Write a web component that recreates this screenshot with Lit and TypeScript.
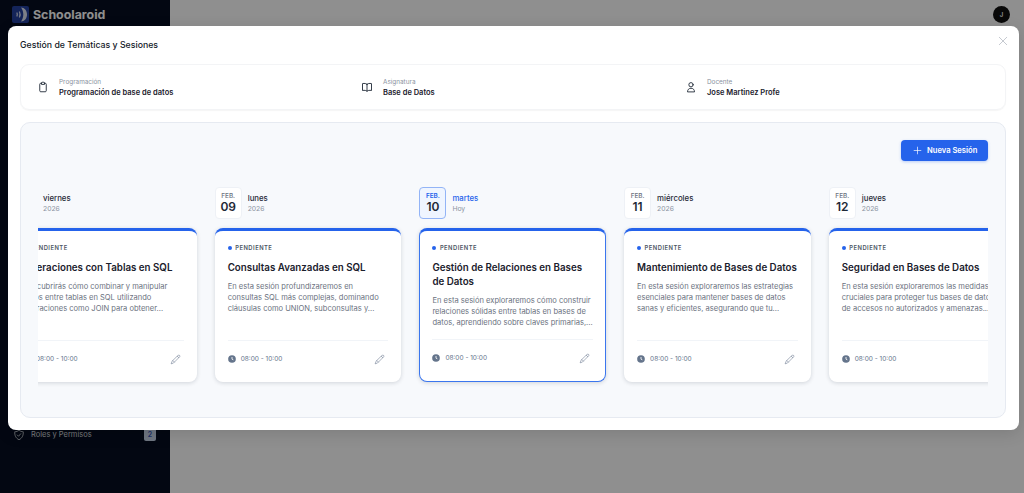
import { LitElement, html, css, svg } from "lit";
import { customElement } from "lit/decorators.js";

const sessions = [
  {
    month: "FEB.",
    day: "06",
    weekday: "viernes",
    sub: "2026",
    title: "Operaciones con Tablas en SQL",
    desc: "Descubrirás cómo combinar y manipular datos entre tablas en SQL utilizando operaciones como JOIN para obtener...",
  },
  {
    month: "FEB.",
    day: "09",
    weekday: "lunes",
    sub: "2026",
    title: "Consultas Avanzadas en SQL",
    desc: "En esta sesión profundizaremos en consultas SQL más complejas, dominando cláusulas como UNION, subconsultas y...",
  },
  {
    month: "FEB.",
    day: "10",
    weekday: "martes",
    sub: "Hoy",
    today: true,
    title: "Gestión de Relaciones en Bases de Datos",
    desc: "En esta sesión exploraremos cómo construir relaciones sólidas entre tablas en bases de datos, aprendiendo sobre claves primarias,...",
  },
  {
    month: "FEB.",
    day: "11",
    weekday: "miércoles",
    sub: "2026",
    title: "Mantenimiento de Bases de Datos",
    desc: "En esta sesión exploraremos las estrategias esenciales para mantener bases de datos sanas y eficientes, asegurando que tu...",
  },
  {
    month: "FEB.",
    day: "12",
    weekday: "jueves",
    sub: "2026",
    title: "Seguridad en Bases de Datos",
    desc: "En esta sesión exploraremos las medidas cruciales para proteger tus bases de datos de accesos no autorizados y amenazas...",
  },
];

const outline = (size: number, width: number, d: unknown) => html`
  <svg width=${size} height=${size} viewBox="0 0 24 24" fill="none" stroke="currentColor" stroke-width=${width} stroke-linecap="round" stroke-linejoin="round">${d}</svg>
`;

const clipboardIcon = svg`<path d="M9 4.500H7.500a2 2 0 0 0-2 2V19.500a2 2 0 0 0 2 2h9a2 2 0 0 0 2-2V6.500a2 2 0 0 0-2-2H15"/><path d="M9 6V3.800A1.300 1.300 0 0 1 10.300 2.500h3.400A1.300 1.300 0 0 1 15 3.800V6z"/>`;
const bookIcon = svg`<path d="M12 6.500C10.500 5.300 8.500 4.800 6 4.800c-1.200 0-2.200.1-3 .4V19c.8-.3 1.800-.4 3-.4 2.500 0 4.500.6 6 1.800 1.500-1.200 3.500-1.800 6-1.800 1.200 0 2.200.1 3 .4V5.200c-.8-.3-1.800-.4-3-.4-2.500 0-4.500.5-6 1.700z"/><path d="M12 6.500v13.900"/>`;
const userIcon = svg`<circle cx="12" cy="7.500" r="4.300"/><path d="M5 21c0-3.800 3-6.500 7-6.500s7 2.700 7 6.500z"/>`;
const pencilIcon = svg`<path d="M18 2.800a2.300 2.300 0 0 1 3.200 3.200L7.500 19.800 2.500 21.500l1.700-5z"/><path d="M16 5l3 3M6.500 14.500l3 3"/>`;
const shieldIcon = svg`<path d="M12 2.500c2.500 2 5.500 3 8.500 3 .4 6.500-1.500 12.500-8.500 16-7-3.500-8.900-9.500-8.500-16 3 0 6-1 8.500-3z"/><path d="M8.500 12l2.500 2.500 4.500-5"/>`;

@customElement("app-root")
export class AppRoot extends LitElement {
  static styles = css`
    :host {
      display: block;
      height: 100vh;
      font-family: Inter, "Liberation Sans", sans-serif;
      background: #fff;
      color: #111827;
      position: relative;
      overflow: hidden;
    }
    .shell {
      display: flex;
      height: 100%;
    }
    .sidebar {
      width: 170px;
      flex: none;
      background: #060e20;
      color: #fff;
      display: flex;
      flex-direction: column;
    }
    .brand {
      display: flex;
      align-items: center;
      gap: 4px;
      padding: 6px 12px;
      font-size: 12.400px;
      font-weight: 700;
    }
    .nav-item {
      display: flex;
      align-items: center;
      gap: 6px;
      margin-top: 399px;
      padding: 0 14px 0 13px;
      font-size: 7.500px;
      color: #d1d5db;
    }
    .nav-item span:first-of-type {
      flex: 1;
    }
    .count {
      width: 12px;
      height: 13px;
      border-radius: 2px;
      background: #c7d2e8;
      color: #3558b8;
      font-size: 7px;
      font-weight: 600;
      display: flex;
      align-items: center;
      justify-content: center;
    }
    .main {
      flex: 1;
      display: flex;
      justify-content: flex-end;
      padding: 6px 14px;
    }
    .avatar {
      width: 17px;
      height: 17px;
      border-radius: 50%;
      background: #111;
      color: #fff;
      font-size: 6px;
      font-weight: 600;
      display: flex;
      align-items: center;
      justify-content: center;
    }
    .overlay {
      position: absolute;
      inset: 0;
      background: rgba(0, 0, 0, 0.44);
      padding: 26px 5px 0 8px;
    }
    .modal {
      position: relative;
      height: 404px;
      background: #fff;
      border-radius: 8px;
      padding: 13px 13px 13px 12px;
      box-sizing: border-box;
      box-shadow: 0 4px 16px rgba(0, 0, 0, 0.12);
    }
    h2 {
      margin: 0 0 12px;
      font-size: 8.750px;
      line-height: 13px;
      font-weight: 500;
      color: #111827;
    }
    .close {
      position: absolute;
      top: 10px;
      right: 11px;
      color: #8b93a1;
      display: flex;
    }
    .info {
      display: grid;
      grid-template-columns: repeat(3, 324px);
      height: 46px;
      box-sizing: border-box;
      padding: 0 0 0 16px;
      border: 1px solid #f3f4f6;
      border-radius: 9px;
      margin-bottom: 12px;
      box-shadow: 0 1px 1px rgba(0, 0, 0, 0.04);
    }
    .info-item {
      display: flex;
      align-items: center;
      gap: 10px;
      color: #1f2937;
    }
    .info-item svg {
      flex: none;
    }
    .info-text {
      padding-top: 2px;
    }
    .info-label {
      font-size: 6.400px;
      line-height: 9px;
      color: #8b93a1;
    }
    .info-value {
      font-size: 7.500px;
      line-height: 11px;
      font-weight: 600;
      color: #1a202c;
    }
    .panel {
      height: 296px;
      box-sizing: border-box;
      background: #f7f9fc;
      border: 1px solid #e6eaf1;
      border-radius: 10px;
      padding: 17px 17px 0;
    }
    .toolbar {
      display: flex;
      justify-content: flex-end;
      margin-bottom: 26px;
    }
    .new {
      display: flex;
      align-items: center;
      gap: 5px;
      height: 21px;
      width: 87px;
      box-sizing: border-box;
      padding: 0 0 0 12px;
      border: 0;
      border-radius: 4px;
      background: #2563eb;
      color: #fff;
      font: 600 7.600px Inter, sans-serif;
      box-shadow: 0 1px 3px rgba(37, 99, 235, 0.3);
    }
    .scroller {
      overflow: hidden;
      padding-bottom: 8px;
    }
    .track {
      display: flex;
      gap: 18px;
      margin-left: -28px;
      width: max-content;
    }
    .col {
      width: 186.700px;
      display: flex;
      flex-direction: column;
      gap: 9px;
    }
    .date {
      display: flex;
      align-items: center;
      gap: 6px;
      height: 32px;
    }
    .date-box {
      width: 27px;
      height: 32px;
      box-sizing: border-box;
      border: 1px solid #eef1f6;
      border-radius: 4px;
      background: #fff;
      display: flex;
      flex-direction: column;
      align-items: center;
      justify-content: center;
    }
    .date-text {
      padding-top: 1px;
    }
    .month {
      font-size: 6.400px;
      line-height: 8px;
      font-weight: 500;
      color: #6b7280;
    }
    .day {
      font-size: 12px;
      line-height: 14px;
      font-weight: 600;
      color: #1f2937;
    }
    .weekday {
      font-size: 7.800px;
      line-height: 11px;
      font-weight: 500;
      color: #1f2937;
    }
    .sub {
      font-size: 6.800px;
      line-height: 10px;
      color: #8b93a1;
    }
    .today .date-box {
      background: #eff5ff;
      border-color: #93b4f6;
    }
    .today .month {
      color: #2563eb;
      font-weight: 600;
    }
    .today .weekday {
      color: #2563eb;
    }
    .card {
      flex: none;
      height: 154px;
      box-sizing: border-box;
      background: #fff;
      border-top: 3px solid #2563eb;
      border-radius: 8px;
      padding: 12px 13px 0;
      display: flex;
      flex-direction: column;
      box-shadow: 0 1px 4px rgba(15, 23, 42, 0.16);
    }
    .today .card {
      border: 1px solid #3b76ee;
      border-top: 3px solid #2563eb;
      padding: 12px 12px 0;
    }
    .status {
      display: flex;
      align-items: center;
      gap: 3.500px;
      font-size: 5.800px;
      line-height: 9px;
      font-weight: 600;
      letter-spacing: 0.5px;
      color: #4b5563;
      margin-bottom: 9px;
    }
    .dot {
      width: 4px;
      height: 4px;
      border-radius: 50%;
      background: #2563eb;
    }
    .title {
      font-size: 9.750px;
      line-height: 13.800px;
      font-weight: 600;
      color: #1a202c;
      margin-bottom: 6px;
    }
    .desc {
      font-size: 7.550px;
      line-height: 11.300px;
      color: #6b7280;
    }
    .foot {
      margin-top: auto;
      height: 42px;
      flex: none;
      border-top: 1px solid #f1f4f8;
      display: flex;
      align-items: center;
      justify-content: space-between;
      padding-bottom: 5px;
      box-sizing: border-box;
      color: #64748b;
    }
    .time {
      display: flex;
      align-items: center;
      gap: 5px;
      font-size: 6.500px;
    }
    .edit {
      display: flex;
      margin-right: 3px;
      color: #64748b;
    }
  `;

  renderSession(s: (typeof sessions)[number]) {
    return html`
      <div class="col ${s.today ? "today" : ""}">
        <div class="date">
          <div class="date-box">
            <div class="month">${s.month}</div>
            <div class="day">${s.day}</div>
          </div>
          <div class="date-text">
            <div class="weekday">${s.weekday}</div>
            <div class="sub">${s.sub}</div>
          </div>
        </div>
        <div class="card">
          <div class="status"><span class="dot"></span>PENDIENTE</div>
          <div class="title">${s.title}</div>
          <div class="desc">${s.desc}</div>
          <div class="foot">
            <div class="time">
              <svg width="8" height="8" viewBox="0 0 24 24"><circle cx="12" cy="12" r="11.500" fill="currentColor"/><path d="M12 6v6.500l4 2" fill="none" stroke="#fff" stroke-width="2.500"/></svg>
              08:00 - 10:00
            </div>
            <span class="edit">${outline(11, 1.2, pencilIcon)}</span>
          </div>
        </div>
      </div>
    `;
  }

  render() {
    return html`
      <div class="shell">
        <aside class="sidebar">
          <div class="brand">
            <svg width="17" height="17" viewBox="0 0 17 17">
              <rect width="17" height="17" rx="2" fill="#24409f"/>
              <path d="M9 1.500c3.500 0 6 3 6 7s-2.500 7-6 7c1.500-2 2.300-4.500 2.300-7S10.500 3.500 9 1.500z" fill="#fff" opacity="0.85"/>
              <path d="M7.500 6c.8 1.600.8 3.400 0 5M5 7c.4 1 .4 2 0 3" fill="none" stroke="#fff" stroke-opacity="0.8" stroke-width="1.300" stroke-linecap="round"/>
            </svg>
            Schoolaroid
          </div>
          <div class="nav-item">
            ${outline(12, 1.6, shieldIcon)}
            <span>Roles y Permisos</span>
            <span class="count">2</span>
          </div>
        </aside>
        <main class="main"><div class="avatar">J</div></main>
      </div>
      <div class="overlay">
        <section class="modal">
          <span class="close">${outline(10, 1.2, svg`<path d="M3 3l18 18M21 3L3 21"/>`)}</span>
          <h2>Gestión de Temáticas y Sesiones</h2>
          <div class="info">
            <div class="info-item">
              ${outline(12, 1.8, clipboardIcon)}
              <div class="info-text"><div class="info-label">Programación</div><div class="info-value">Programación de base de datos</div></div>
            </div>
            <div class="info-item">
              ${outline(12, 1.8, bookIcon)}
              <div class="info-text"><div class="info-label">Asignatura</div><div class="info-value">Base de Datos</div></div>
            </div>
            <div class="info-item">
              ${outline(12, 1.8, userIcon)}
              <div class="info-text"><div class="info-label">Docente</div><div class="info-value">Jose Martinez Profe</div></div>
            </div>
          </div>
          <div class="panel">
            <div class="toolbar">
              <button class="new">${outline(9, 1.8, svg`<path d="M12 3v18M3 12h18"/>`)}Nueva Sesión</button>
            </div>
            <div class="scroller">
              <div class="track">${sessions.map((s) => this.renderSession(s))}</div>
            </div>
          </div>
        </section>
      </div>
    `;
  }
}
